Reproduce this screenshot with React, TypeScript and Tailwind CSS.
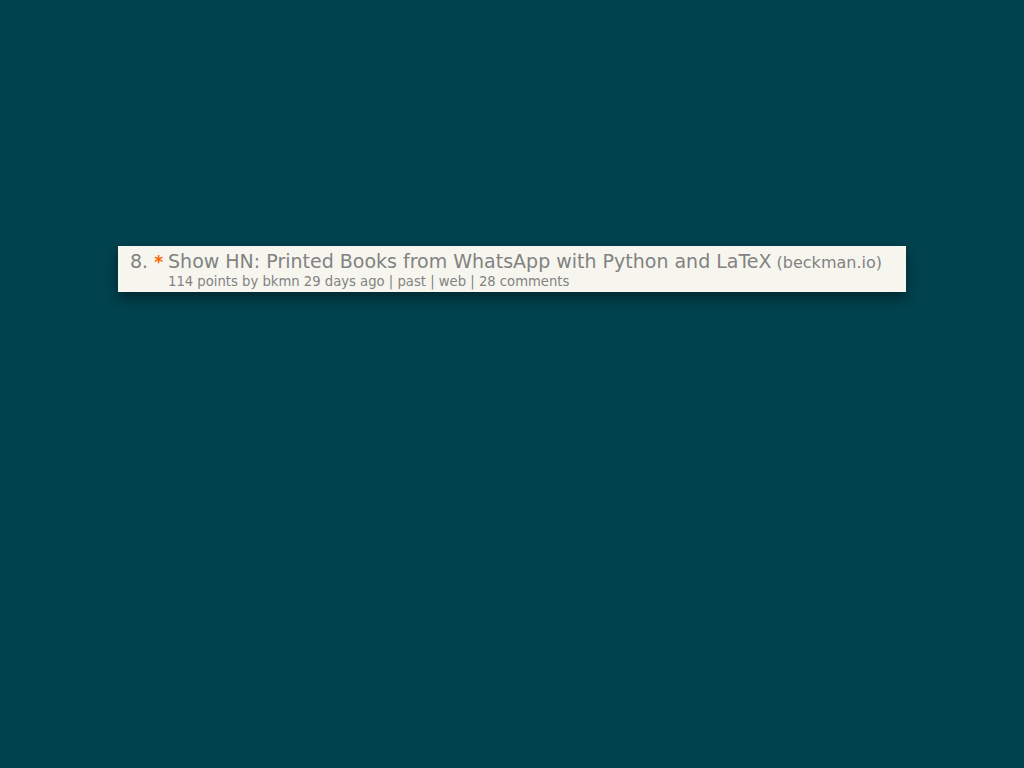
export default function App() {
  return (
    <div className="w-[1024px] h-[768px] bg-[#00434f] pt-[246px] pl-[118px]" style={{ fontFamily: '"DejaVu Sans", Verdana, sans-serif' }}>
      <div className="w-[788px] h-[46px] bg-[#f6f6ef] shadow-[0_6px_14px_rgba(0,0,0,0.45)] pl-[12px] pt-[4px] text-[#828282]">
        <div className="flex items-baseline text-[19px] leading-[23px] whitespace-nowrap">
          <span>8.</span>
          <span className="text-[#ff6600] ml-[6px] text-[17px] font-bold">*</span>
          <span className="ml-[5px]">Show HN: Printed Books from WhatsApp with Python and LaTeX</span>
          <span className="ml-[5px] text-[16px]">(beckman.io)</span>
        </div>
        <div className="pl-[38px] text-[13.2px] leading-[15px] whitespace-nowrap">
          114 points by bkmn 29 days ago | past | web | 28 comments
        </div>
      </div>
    </div>
  );
}
